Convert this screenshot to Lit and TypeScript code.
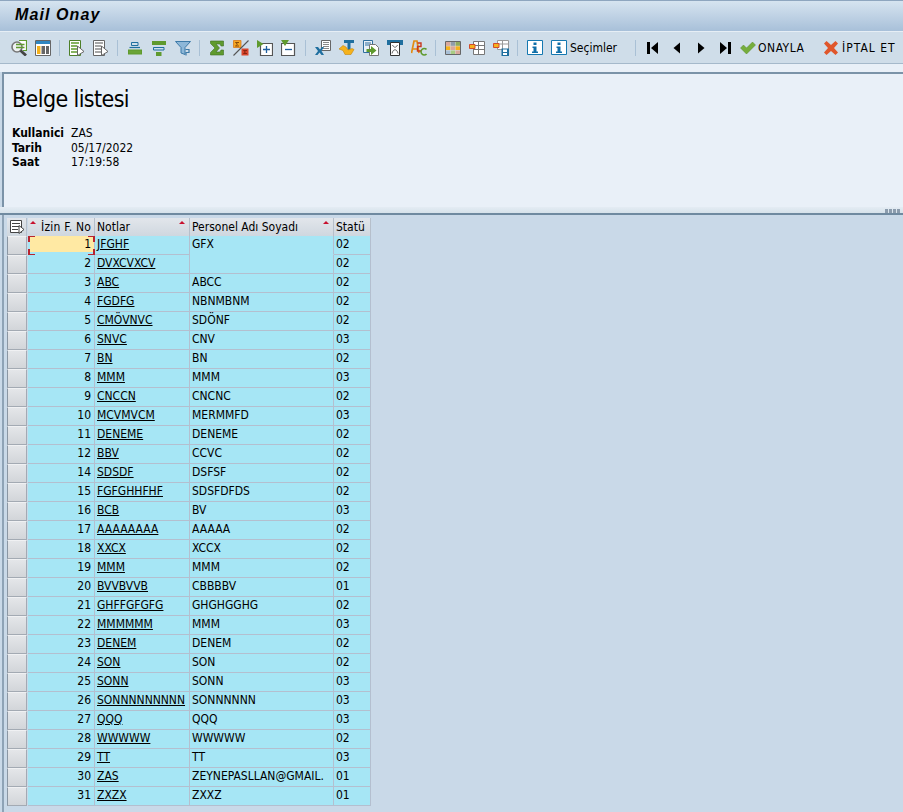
import { LitElement, html, css, svg } from "lit";
import { customElement } from "lit/decorators.js";

const rows = [
  ["1", "JFGHF", "GFX", "02"],
  ["2", "DVXCVXCV", "", "02"],
  ["3", "ABC", "ABCC", "02"],
  ["4", "FGDFG", "NBNMBNM", "02"],
  ["5", "CMÖVNVC", "SDÖNF", "02"],
  ["6", "SNVC", "CNV", "03"],
  ["7", "BN", "BN", "02"],
  ["8", "MMM", "MMM", "03"],
  ["9", "CNCCN", "CNCNC", "02"],
  ["10", "MCVMVCM", "MERMMFD", "03"],
  ["11", "DENEME", "DENEME", "02"],
  ["12", "BBV", "CCVC", "02"],
  ["14", "SDSDF", "DSFSF", "02"],
  ["15", "FGFGHHFHF", "SDSFDFDS", "02"],
  ["16", "BCB", "BV", "03"],
  ["17", "AAAAAAAA", "AAAAA", "02"],
  ["18", "XXCX", "XCCX", "02"],
  ["19", "MMM", "MMM", "02"],
  ["20", "BVVBVVB", "CBBBBV", "01"],
  ["21", "GHFFGFGFG", "GHGHGGHG", "02"],
  ["22", "MMMMMM", "MMM", "03"],
  ["23", "DENEM", "DENEM", "02"],
  ["24", "SON", "SON", "02"],
  ["25", "SONN", "SONN", "03"],
  ["26", "SONNNNNNNNN", "SONNNNNN", "03"],
  ["27", "QQQ", "QQQ", "03"],
  ["28", "WWWWW", "WWWWW", "02"],
  ["29", "TT", "TT", "03"],
  ["30", "ZAS", "ZEYNEPASLLAN@GMAIL.", "01"],
  ["31", "ZXZX", "ZXXZ", "01"],
];

const G = "#5f9a2e";
const B = "#1f6f9f";

const icons: Record<string, unknown> = {
  find: svg`<path d="M8 .5h7.500v10H12" fill="#fff" stroke="${G}" stroke-width="1.200"/><circle cx="6" cy="7" r="5" fill="#eef2f2" stroke="#777" stroke-width="1.600"/><path d="M5 4.500h8.500M5 7.500h8.500" stroke="${G}" stroke-width="1.600"/><path d="M9.500 10.500l5.500 5" stroke="#444" stroke-width="2.800"/>`,
  layout: svg`<path d="M.5 .5h15v15H.5z" fill="#fff" stroke="#666"/><path d="M1 1h14v3H1z" fill="#2f86c1"/><path d="M2 6h3.500v8H2z" fill="#f5b21c"/><path d="M6.500 6H10v8H6.500zM11 6h3v8h-3z" fill="#666"/>`,
  detail: svg`<path d="M.5 .5h11v15H.5z" fill="#fff" stroke="#4d7f28"/><path d="M2 3h8M2 6h6M2 9h6M2 12h6" stroke="${G}" stroke-width="1.700"/><path d="M8.500 6l6.500 5.500-6.500 4z" fill="#fff" stroke="#666"/>`,
  detail2: svg`<path d="M.5 .5h11v15H.5z" fill="#fff" stroke="#666"/><path d="M2 3h8M2 6h6M2 9h6M2 12h6" stroke="#8a8a8a" stroke-width="1.500"/><path d="M8.500 6l6.500 5.500-6.500 4z" fill="#fff" stroke="#666"/>`,
  sortAsc: svg`<path d="M4.500 2.500h6.500v3H4.500z" fill="#cfe0ea" stroke="${B}"/><path d="M1 9.500h14v5H1z" fill="${G}"/><path d="M2.500 7.500h10.500" stroke="${B}" stroke-width="1.200"/><path d="M2 10.500h12v3H2z" fill="#6aa437"/>`,
  sortDesc: svg`<path d="M1 1h14v4H1z" fill="${G}"/><path d="M2.500 7.500h10.500v2.500H2.500z" fill="#cfe0ea" stroke="${B}"/><path d="M5 12h5.500v4H5z" fill="${G}"/>`,
  filter: svg`<path d="M.5 1.500h15l-5.500 6v7l-4-1.500V7.500z" fill="#8db7d8" stroke="#3d7aa8"/><path d="M10.500 9.500H14v3h-3v3" fill="none" stroke="#3d7aa8" stroke-width="1.200"/>`,
  sum: svg`<path d="M1.500 1h13v5h-2.500L11 4H7l3.500 4L7 12h4l1-2h2.500v5h-13v-2.500L6 8 1.500 3.500z" fill="${G}" stroke="#3f7022" stroke-width=".6"/>`,
  subtotal: svg`<path d="M.5 .5h7.500v7H.5z" fill="#f5a623" stroke="#d9781a" stroke-width=".8"/><path d="M6 2.500H2.500l2 1.700-2 1.800H6" fill="none" stroke="#8a4b08"/><path d="M8.500 8.500h7v7h-7z" fill="#d8452b"/><path d="M14 10.500h-3.500l2 1.500-2 1.500H14" fill="none" stroke="#8a2412"/><path d="M15.500 .5L.5 15.500" stroke="#555" stroke-width="1.100"/>`,
  expand: svg`<path d="M3.500 3.500h12v12h-12z" fill="#fff" stroke="#555" stroke-width="1.200"/><path d="M9.500 6v7M6 9.500h7" stroke="#1f5f9f" stroke-width="1.300"/><path d="M0 0l6.500 4L0 8z" fill="#5f9a2e"/>`,
  collapse: svg`<path d="M.5 3.500h13v12H.5z" fill="#fff" stroke="#555" stroke-width="1.200"/><path d="M4 9.500h7" stroke="#1f5f9f" stroke-width="1.300"/><path d="M0 0h8L4 6z" fill="#5f9a2e"/>`,
  excel: svg`<path d="M6.500 .5h9v10h-9z" fill="#fff" stroke="#666"/><path d="M8 2.500h6M8 4.500h6M8 6.500h6M8 8.500h6" stroke="#888"/><path d="M0 7h3l2 2.500L7 7h2L6.500 11 9 15H6.500L4.500 12.500 2.500 15H0l3-4z" fill="${B}"/>`,
  word: svg`<path d="M5 0h10v3h-3.500v8h-3V3H5z" fill="${B}"/><path d="M0 9l4-3.500L7 7l2 3 4-1.500 2 1-3 5H6L4 10.500z" fill="#f5b21c" stroke="#c4870d" stroke-width=".6"/>`,
  export: svg`<path d="M.5 .5h9v12h-9z" fill="#e9f1f8" stroke="#2f6f9f"/><path d="M2 3h6M2 5h4" stroke="#2f6f9f"/><path d="M6.500 4.500h6l3 3v8h-9z" fill="#fff" stroke="#777"/><path d="M3.500 9H8V6l5.500 4.500L8 15v-3H3.500z" fill="${G}"/>`,
  print: svg`<path d="M0 0h16v5h-3V3H3v2H0z" fill="${B}"/><path d="M3.500 2.500h9v13h-9z" fill="#fff" stroke="#333"/><path d="M5.500 5c1.500 3 3.500 3 5 0M5 13.500c1-5 5-5 6 0" fill="none" stroke="#666"/>`,
  spell: svg`<path d="M.5 13L3 1h3l2 12M2 9h5" fill="none" stroke="#e28c12" stroke-width="1.700"/><path d="M6.500 3H10v3.500H6.500V11H10" fill="none" stroke="#c8371f" stroke-width="1.400"/><path d="M15.500 9.500a3.200 3.200 0 1 0 0 4.500" fill="none" stroke="${G}" stroke-width="1.600"/>`,
  grid: svg`<path d="M.5 1.500h15v13H.5z" fill="#ddd" stroke="#666"/><path d="M1 2h4.300v3.800H1z" fill="#d9a89b"/><path d="M5.700 2H10v3.800H5.700z" fill="#8f9dab"/><path d="M10.500 2H15v3.800h-4.500z" fill="#8eaa5e"/><path d="M1 6.300h4.300V10H1z" fill="#f5b21c"/><path d="M5.700 6.300H10V10H5.700z" fill="#d9a89b"/><path d="M10.500 6.300H15V10h-4.500z" fill="#f5b21c"/><path d="M1 10.500h4.300V14H1z" fill="#a8bfd6"/><path d="M5.700 10.500H10V14H5.700z" fill="#a8cc84"/><path d="M10.500 10.500H15V14h-4.500z" fill="#d9a89b"/>`,
  sel: svg`<path d="M4.500 1.500h11v13h-11zM4.500 5.500h11M4.500 9.500h11M9.500 1.500v13" fill="#fff" stroke="#777"/><path d="M.5 4.500H6v4H.5z" fill="#f5b21c" stroke="#d24a2a"/>`,
  save: svg`<path d="M4.500 .5h11v9h-11zM4.500 4h11M9.500 .5v9" fill="#fff" stroke="#999"/><path d="M.5 3.500H6v4H.5z" fill="#f5b21c" stroke="#d24a2a"/><path d="M8.500 8.500h7.500v7.500H8.500z" fill="${B}"/><path d="M10 9.500h4V12h-4zM10 13h4v2h-4z" fill="#fff"/>`,
  info: svg`<path d="M.5 .5h15v14H.5z" fill="#fff" stroke="#1578b0"/><path d="M6.500 2.500h3V5h-3zM5.500 6.500h4v5H11V13H5v-1.500h1.500V8h-1z" fill="#0f6ea8"/>`,
  first: svg`<path d="M2 2h3v12H2zM13 2v12L6 8z" fill="#000"/>`,
  prev: svg`<path d="M11 2.500v11L4.500 8z" fill="#000"/>`,
  next: svg`<path d="M5 2.500v11L11.500 8z" fill="#000"/>`,
  last: svg`<path d="M11 2h3v12h-3zM3 2v12l7-6z" fill="#000"/>`,
  check: svg`<path d="M.5 8l3-3 3 3 6-6 3 3-9 9z" fill="#76ad3c" stroke="#578a28" stroke-width=".5"/>`,
  cross: svg`<path d="M1 3.500L3.500 1 8 5l4.500-4L15 3.500 11 8l4 4.500-2.500 2.500L8 11l-4.500 4L1 12.500 5 8z" fill="#e0562b"/>`,
  selectAll: svg`<path d="M1.500 1.500h11v12h-11z" fill="#fff" stroke="#444"/><path d="M3 4.500h8M3 7.500h8M3 10.500h6" stroke="#444" stroke-width="1.200"/><path d="M10 6.500l5 4-5 4z" fill="#fff" stroke="#444"/>`,
};

const ic = (name: string) => html`<svg class="ic" viewBox="0 0 16 16" width="16" height="16">${icons[name]}</svg>`;

const toolbarGroups = [
  ["find", "layout"],
  ["detail", "detail2"],
  ["sortAsc", "sortDesc", "filter"],
  ["sum", "subtotal", "expand", "collapse"],
  ["excel", "word", "export", "print", "spell"],
  ["grid", "sel", "save"],
];

@customElement("app-root")
export class AppRoot extends LitElement {
  static styles = css`
    :host {
      display: block;
      width: 903px;
      height: 812px;
      overflow: hidden;
      background: #c9d9e8;
      font-family: "DejaVu Sans Condensed", "DejaVu Sans", sans-serif;
      font-stretch: condensed;
      font-size: 12px;
      color: #000;
    }
    .title {
      height: 31px;
      box-sizing: border-box;
      padding-left: 15px;
      border-top: 1px solid #8ea6bf;
      background: linear-gradient(#d6e4f0, #a8c0d9);
      font-family: "Liberation Sans", sans-serif;
      font-stretch: normal;
      font-weight: bold;
      font-style: italic;
      font-size: 16px;
      letter-spacing: 1.1px;
      line-height: 28px;
    }
    .toolbar {
      height: 33px;
      box-sizing: border-box;
      display: flex;
      align-items: center;
      padding-left: 7px;
      background: #cfdde9;
      border-top: 1px solid #e6eef5;
      border-bottom: 1px solid #a5b9cb;
      white-space: nowrap;
    }
    .btn {
      width: 24.1px;
      display: flex;
      justify-content: center;
      flex: none;
    }
    .ic {
      display: block;
      flex: none;
    }
    .sep {
      width: 1px;
      height: 16px;
      background: #a9c0d5;
      margin: 0 4.7px 0 4px;
      flex: none;
    }
    .textbtn {
      display: flex;
      align-items: center;
      flex: none;
    }
    .sel {
      width: 84px;
      padding-left: 4px;
      box-sizing: border-box;
      gap: 3px;
    }
    .onayla {
      width: 86px;
      padding-left: 3px;
      box-sizing: border-box;
      gap: 2px;
      letter-spacing: 0.5px;
    }
    .cancel {
      gap: 3px;
      letter-spacing: 1px;
    }
    .strip {
      height: 8px;
      background: #e9f0f8;
    }
    .top {
      height: 135px;
      box-sizing: border-box;
      margin-left: 2px;
      padding: 10px 0 0 8px;
      background: #e9f0f8;
      border-top: 2px solid #7b93a8;
      border-left: 2px solid #7b93a8;
    }
    h1 {
      margin: 0 0 12px;
      font-size: 23px;
      font-weight: normal;
      letter-spacing: -0.6px;
      line-height: 30px;
    }
    .meta {
      display: grid;
      grid-template-columns: 59px auto;
      justify-content: start;
      line-height: 14.5px;
    }
    .sash {
      height: 6px;
      display: flex;
      justify-content: flex-end;
      align-items: flex-end;
      padding-right: 2px;
      background: linear-gradient(#e4ecf4, #d6e2ea);
      border-bottom: 2px solid #6f8aa0;
    }
    .grip {
      width: 16px;
      height: 4px;
      background: repeating-linear-gradient(90deg, #8b9cad 0 3px, transparent 3px 4px);
    }
    .body {
      margin-left: 2px;
      padding: 3px 0 0 3px;
      border-left: 2px solid #8ea3b6;
      height: 597px;
      box-sizing: border-box;
    }
    .table {
      display: grid;
      grid-template-columns: 20px 1px 67px 95px 144px 37px;
      grid-template-rows: 18px;
      grid-auto-rows: 19px;
      width: 364px;
    }
    .h {
      display: flex;
      align-items: center;
      position: relative;
      padding-left: 2px;
      background: linear-gradient(#e2e6eb, #cfd7df);
      border-right: 1px solid #b6bfca;
      white-space: nowrap;
      overflow: hidden;
    }
    .h-num {
      justify-content: flex-end;
      padding-right: 3px;
      letter-spacing: 0.2px;
    }
    .tri {
      position: absolute;
      top: 3px;
      right: 4px;
      width: 0;
      height: 0;
      border: 3px solid transparent;
      border-top: 0;
      border-bottom: 3px solid #c8102e;
    }
    .tri-left {
      left: 2px;
      right: auto;
    }
    .corner {
      justify-content: center;
      padding: 0;
    }
    .gap {
      background: #c9d9e8;
    }
    .rowsel {
      box-sizing: border-box;
      background: linear-gradient(#e4e6e9, #d2d5d9);
      border: 1px solid #a3aab3;
      border-top-color: #f0f1f3;
      border-left-color: #8a96a3;
    }
    .c {
      box-sizing: border-box;
      background: #a6e6f5;
      border-right: 1px solid #b4bfcf;
      border-bottom: 1px solid #b4bfcf;
      padding-left: 2px;
      line-height: 17px;
      white-space: nowrap;
      overflow: hidden;
    }
    .num {
      text-align: right;
      padding: 0 3px 0 0;
    }
    .link {
      text-decoration: underline;
    }
    .merged {
      border-bottom-color: #a6e6f5;
    }
    .focus {
      position: relative;
      background: linear-gradient(#ffe9a3, #ffe9a3) 2px 0 / calc(100% - 2px) 16px no-repeat, #a6e6f5;
      border-bottom-color: #a6e6f5;
      overflow: visible;
    }
    .corner-mark {
      position: absolute;
      width: 5px;
      height: 5px;
      border: 0 solid #b8232f;
    }
    .tl { left: 0; top: 0; border-width: 1px 0 0 2px; }
    .tr { right: -1px; top: 0; border-width: 1px 2px 0 0; }
    .bl { left: 0; bottom: -1px; border-width: 0 0 1px 2px; }
    .br { right: -1px; bottom: -1px; border-width: 0 2px 1px 0; }
  `;

  renderRow(r: string[], i: number) {
    return html`
      <div class="rowsel"></div>
      <div class="gap"></div>
      <div class="c num ${i === 0 ? "focus" : ""}">
        ${r[0]}
        ${i === 0
          ? html`<i class="corner-mark tl"></i><i class="corner-mark tr"></i><i class="corner-mark bl"></i><i class="corner-mark br"></i>`
          : ""}
      </div>
      <div class="c"><span class="link">${r[1]}</span></div>
      <div class="c ${i === 0 ? "merged" : ""}">${r[2]}</div>
      <div class="c">${r[3]}</div>
    `;
  }

  render() {
    return html`
      <div class="title">Mail Onay</div>
      <div class="toolbar">
        ${toolbarGroups.map(
          (g) => html`${g.map((n) => html`<span class="btn">${ic(n)}</span>`)}<span class="sep"></span>`
        )}
        <span class="btn">${ic("info")}</span>
        <span class="textbtn sel">${ic("info")}<span>Seçimler</span></span>
        <span class="sep"></span>
        <span class="btn">${ic("first")}</span>
        <span class="btn">${ic("prev")}</span>
        <span class="btn">${ic("next")}</span>
        <span class="btn">${ic("last")}</span>
        <span class="textbtn onayla">${ic("check")}<span>ONAYLA</span></span>
        <span class="textbtn cancel">${ic("cross")}<span>İPTAL ET</span></span>
      </div>
      <div class="strip"></div>
      <div class="top">
        <h1>Belge listesi</h1>
        <div class="meta">
          <b>Kullanici</b><span>ZAS</span>
          <b>Tarih</b><span>05/17/2022</span>
          <b>Saat</b><span>17:19:58</span>
        </div>
      </div>
      <div class="sash"><span class="grip"></span></div>
      <div class="body">
        <div class="table">
          <div class="h corner">${ic("selectAll")}</div>
          <div class="gap"></div>
          <div class="h h-num"><i class="tri tri-left"></i>İzin F. No</div>
          <div class="h">Notlar<i class="tri"></i></div>
          <div class="h">Personel Adı Soyadı<i class="tri"></i></div>
          <div class="h">Statü</div>
          ${rows.map((r, i) => this.renderRow(r, i))}
        </div>
      </div>
    `;
  }
}
